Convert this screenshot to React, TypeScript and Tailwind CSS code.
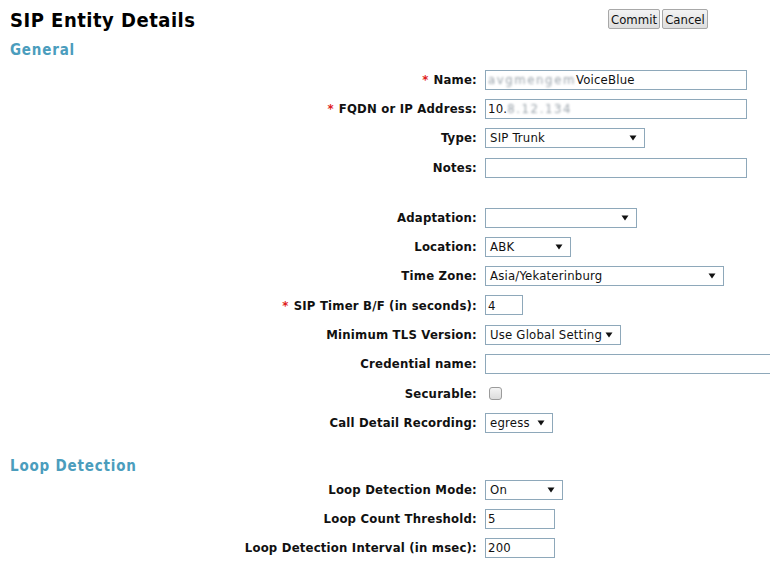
import React from "react";

type Row =
  | { kind: "input"; label: string; req?: boolean; w: number; value?: React.ReactNode; overflow?: boolean }
  | { kind: "select"; label: string; req?: boolean; w: number; value: string }
  | { kind: "check"; label: string }
  | { kind: "spacer"; h: string };

const Arrow = () => (
  <svg width="8" height="6" viewBox="0 0 8 6" className="shrink-0">
    <polygon points="0.5,0.5 7.5,0.5 4,5.5" fill="#111" />
  </svg>
);

const Blur = ({ children }: { children: React.ReactNode }) => (
  <span className="text-[#9aa3ab] blur-[1.2px] tracking-[1.6px]">{children}</span>
);

const general: Row[] = [
  {
    kind: "input",
    label: "Name:",
    req: true,
    w: 262,
    value: (
      <>
        <Blur>avgmengem</Blur>
        <span>VoiceBlue</span>
      </>
    ),
  },
  {
    kind: "input",
    label: "FQDN or IP Address:",
    req: true,
    w: 262,
    value: (
      <>
        <span>10.</span>
        <Blur>8.12.134</Blur>
      </>
    ),
  },
  { kind: "select", label: "Type:", w: 160, value: "SIP Trunk" },
  { kind: "input", label: "Notes:", w: 262 },
  { kind: "spacer", h: "h-[20.7px]" },
  { kind: "select", label: "Adaptation:", w: 152, value: "" },
  { kind: "select", label: "Location:", w: 86, value: "ABK" },
  { kind: "select", label: "Time Zone:", w: 239, value: "Asia/Yekaterinburg" },
  { kind: "input", label: "SIP Timer B/F (in seconds):", req: true, w: 38, value: "4" },
  { kind: "select", label: "Minimum TLS Version:", w: 136, value: "Use Global Setting" },
  { kind: "input", label: "Credential name:", w: 300, overflow: true },
  { kind: "check", label: "Securable:" },
  { kind: "select", label: "Call Detail Recording:", w: 68, value: "egress" },
];

const loop: Row[] = [
  { kind: "select", label: "Loop Detection Mode:", w: 78, value: "On" },
  { kind: "input", label: "Loop Count Threshold:", w: 70, value: "5" },
  { kind: "input", label: "Loop Detection Interval (in msec):", w: 70, value: "200" },
];

function FormRow({ row }: { row: Row }) {
  if (row.kind === "spacer") return <div className={row.h} />;
  return (
    <div className="flex h-[29.3px] items-center">
      <div className="w-[477px] shrink-0 text-right text-[13px] font-bold text-[#111] tracking-[0.2px] whitespace-nowrap">
        {"req" in row && row.req ? <span className="text-[#e0201c] mr-[5px]">*</span> : null}
        {row.label}
      </div>
      <div className="ml-[8px] flex items-center">
        {row.kind === "input" && (
          <div
            className="h-[20px] border border-[#8ea8ba] bg-white flex items-center pl-[2px] text-[13px] text-[#111] whitespace-nowrap overflow-hidden tracking-[0.2px]"
            style={{ width: row.w }}
          >
            {row.value}
          </div>
        )}
        {row.kind === "select" && (
          <div
            className="h-[20px] border border-[#8ea8ba] bg-white flex items-center justify-between pl-[4px] pr-[7px] text-[13px] text-[#111] whitespace-nowrap tracking-[0.2px]"
            style={{ width: row.w }}
          >
            <span>{row.value}</span>
            <Arrow />
          </div>
        )}
        {row.kind === "check" && (
          <div className="ml-[4px] w-[13px] h-[13px] rounded-[3px] border border-[#9b9b9b] bg-gradient-to-b from-[#f4f4f4] to-[#dcdcdc]" />
        )}
      </div>
    </div>
  );
}

export default function App() {
  return (
    <div className="w-[770px] h-[571px] overflow-hidden bg-white font-['DejaVu_Sans_Condensed','DejaVu_Sans',sans-serif] [font-stretch:condensed]">
      <div className="flex items-start pt-[8px] pl-[10px]">
        <h1 className="text-[20px] font-bold text-black leading-[24px] tracking-[0.5px]">SIP Entity Details</h1>
        <div className="ml-auto mr-[62px] mt-[1px] flex gap-[2px]">
          <button className="h-[20px] w-[52px] border border-[#a8a8a8] rounded-[2px] bg-gradient-to-b from-[#f3f3f3] to-[#dedede] text-[13px] text-[#111] leading-none">
            Commit
          </button>
          <button className="h-[20px] w-[46px] border border-[#a8a8a8] rounded-[2px] bg-gradient-to-b from-[#f3f3f3] to-[#dedede] text-[13px] text-[#111] leading-none">
            Cancel
          </button>
        </div>
      </div>
      <h2 className="pl-[10px] mt-[9px] text-[15px] font-bold text-[#4b9dbd] leading-[18px] tracking-[0.8px]">General</h2>
      <div className="mt-[6px]">
        {general.map((r, i) => (
          <FormRow key={i} row={r} />
        ))}
      </div>
      <div className="h-[37.7px] flex items-end pl-[10px]">
        <h2 className="text-[15px] font-bold text-[#4b9dbd] leading-[18px] tracking-[0.8px]">Loop Detection</h2>
      </div>
      <div>
        {loop.map((r, i) => (
          <FormRow key={i} row={r} />
        ))}
      </div>
    </div>
  );
}
